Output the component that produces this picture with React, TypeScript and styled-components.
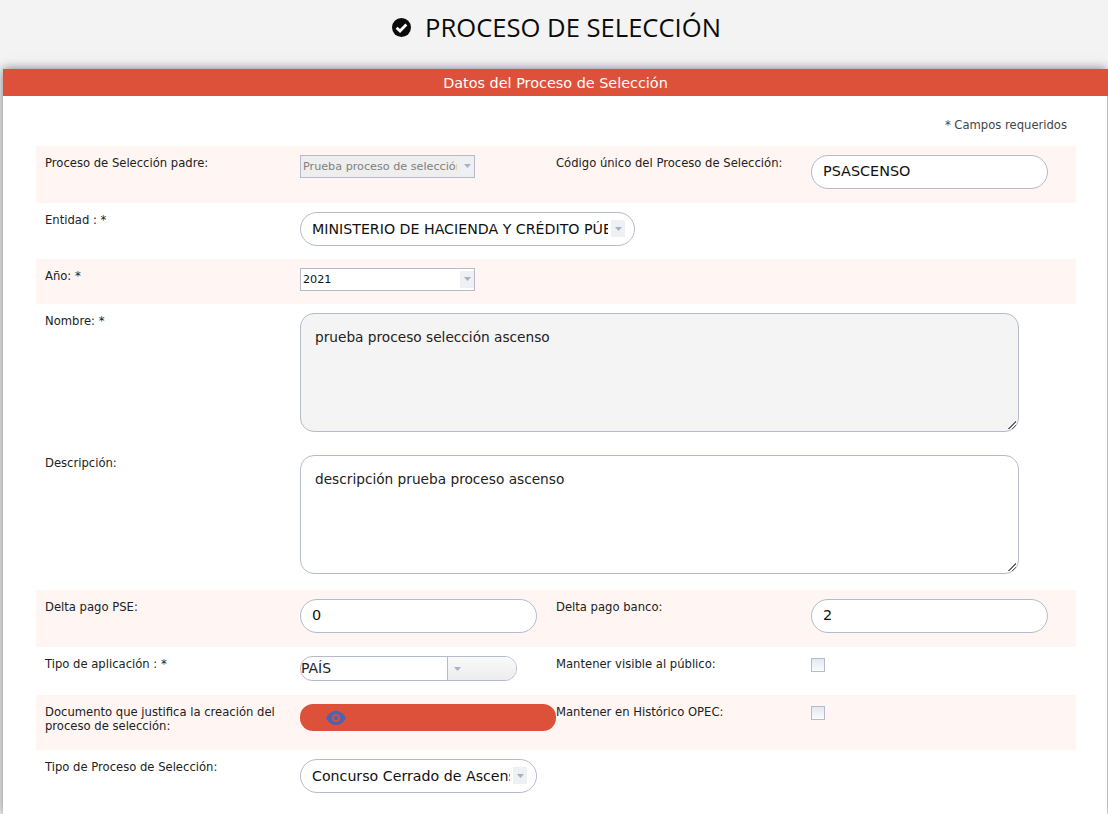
import React from "react";
import styled, { createGlobalStyle } from "styled-components";

const GlobalStyle = createGlobalStyle`
  html, body {
    margin: 0;
    height: 814px;
    overflow: hidden;
    background: #f3f3f3;
    font-family: "DejaVu Sans", Verdana, sans-serif;
    color: #222;
  }
`;

function CheckIcon() {
  return (
    <svg width="19" height="19" viewBox="0 0 18 18" aria-hidden="true">
      <circle cx="9" cy="9" r="9" fill="#0b0b0b" />
      <path d="M4.4 9.2 L7.6 12.3 L13.6 6.2" fill="none" stroke="#fff" strokeWidth="2.7" />
    </svg>
  );
}

function EyeIcon() {
  return (
    <svg width="20" height="14" viewBox="0 0 20 14" aria-hidden="true">
      <path d="M0 7 C3.5 1.5 6.5 0 10 0 C13.5 0 16.5 1.5 20 7 C16.5 12.5 13.5 14 10 14 C6.5 14 3.5 12.5 0 7 Z" fill="#4a63b5" />
      <circle cx="10" cy="7" r="4" fill="#dd513a" />
      <circle cx="10" cy="7" r="2.2" fill="#4a63b5" />
    </svg>
  );
}

function Caret() {
  return (
    <svg width="7" height="4" viewBox="0 0 7 4" aria-hidden="true">
      <path d="M0 0 H7 L3.5 4 Z" fill="#a6b0c8" />
    </svg>
  );
}

export default function App() {
  return (
    <>
      <GlobalStyle />
      <Title>
        <CheckIcon />
        <TitleText>PROCESO DE SELECCIÓN</TitleText>
      </Title>
      <Card>
        <CardHeader>Datos del Proceso de Selección</CardHeader>
        <CardBody>
          <Required>* Campos requeridos</Required>

          <Row $shaded $height={57}>
            <Label>Proceso de Selección padre:</Label>
            <Cell $top={9}>
              <SmallSelect $disabled>
                <SmallValue>Prueba proceso de selección</SmallValue>
                <CaretBox><Caret /></CaretBox>
              </SmallSelect>
            </Cell>
            <SecondLabel>Código único del Proceso de Selección:</SecondLabel>
            <Cell $top={9}>
              <PillInput>PSASCENSO</PillInput>
            </Cell>
          </Row>

          <Row $height={56}>
            <Label>Entidad : *</Label>
            <WideCell $top={9}>
              <PillSelect $width={335}>
                <PillValue>MINISTERIO DE HACIENDA Y CRÉDITO PÚBLICO</PillValue>
                <CaretBox><Caret /></CaretBox>
              </PillSelect>
            </WideCell>
          </Row>

          <Row $shaded $height={45}>
            <Label>Año: *</Label>
            <Cell $top={9}>
              <SmallSelect>
                <SmallValue>2021</SmallValue>
                <CaretBox><Caret /></CaretBox>
              </SmallSelect>
            </Cell>
          </Row>

          <Row $height={142}>
            <Label>Nombre: *</Label>
            <WideCell $top={9}>
              <TextBlock $grey>prueba proceso selección ascenso</TextBlock>
            </WideCell>
          </Row>

          <Row $height={144}>
            <Label>Descripción:</Label>
            <WideCell $top={9}>
              <TextBlock>descripción prueba proceso ascenso</TextBlock>
            </WideCell>
          </Row>

          <Row $shaded $height={57}>
            <Label>Delta pago PSE:</Label>
            <Cell $top={9}>
              <PillInput>0</PillInput>
            </Cell>
            <SecondLabel>Delta pago banco:</SecondLabel>
            <Cell $top={9}>
              <PillInput>2</PillInput>
            </Cell>
          </Row>

          <Row $height={48}>
            <Label>Tipo de aplicación : *</Label>
            <Cell $top={9}>
              <ComboBox>
                <ComboValue>PAÍS</ComboValue>
                <ComboArrow><Caret /></ComboArrow>
              </ComboBox>
            </Cell>
            <SecondLabel>Mantener visible al público:</SecondLabel>
            <Cell $top={11}>
              <CheckBox />
            </Cell>
          </Row>

          <Row $shaded $height={55}>
            <Label>Documento que justifica la creación del proceso de selección:</Label>
            <Cell $top={9}>
              <DocButton>
                <EyeIcon />
              </DocButton>
            </Cell>
            <SecondLabel>Mantener en Histórico OPEC:</SecondLabel>
            <Cell $top={11}>
              <CheckBox />
            </Cell>
          </Row>

          <Row $height={64}>
            <Label>Tipo de Proceso de Selección:</Label>
            <Cell $top={9}>
              <PillSelect $width={237}>
                <PillValue>Concurso Cerrado de Ascenso</PillValue>
                <CaretBox><Caret /></CaretBox>
              </PillSelect>
            </Cell>
          </Row>
        </CardBody>
      </Card>
    </>
  );
}

const Title = styled.header`
  height: 69px;
  box-sizing: border-box;
  padding: 0 0 15px 5px;
  display: flex;
  align-items: center;
  justify-content: center;
  gap: 14px;
`;

const TitleText = styled.h1`
  margin: 0;
  font-family: "Open Sans", sans-serif;
  font-size: 25.6px;
  font-weight: 400;
  color: #0b0b0b;
`;

const Card = styled.main`
  margin: 0 1px 0 3px;
  background: #fff;
  box-shadow: 0 0 10px rgba(0, 0, 0, 0.5);
  height: 745px;
`;

const CardHeader = styled.div`
  height: 27px;
  box-sizing: border-box;
  margin-right: -1px;
  padding-top: 1px;
  line-height: 27px;
  background: #dd513a;
  color: #fff;
  text-align: center;
  font-size: 14.4px;
`;

const CardBody = styled.div`
  padding: 0 31px 0 33px;
`;

const Required = styled.div`
  height: 50px;
  box-sizing: border-box;
  padding: 22px 9px 0 0;
  text-align: right;
  font-size: 11.6px;
  line-height: 15px;
  color: #444;
`;

const Row = styled.div<{ $shaded?: boolean; $height: number }>`
  height: ${(p) => p.$height}px;
  display: grid;
  grid-template-columns: 264px 255px 256px 1fr;
  background: ${(p) => (p.$shaded ? "#fff5f3" : "#fff")};
`;

const Label = styled.div`
  padding: 10px 10px 0 9px;
  font-size: 11.6px;
  line-height: 14px;
  color: #222;
`;

const SecondLabel = styled(Label)`
  padding-left: 1px;
`;

const Cell = styled.div<{ $top: number }>`
  padding-top: ${(p) => p.$top}px;
  min-width: 0;
`;

const WideCell = styled(Cell)`
  grid-column: 2 / 5;
`;

const SmallSelect = styled.div<{ $disabled?: boolean }>`
  width: 175px;
  height: 23px;
  box-sizing: border-box;
  display: flex;
  align-items: center;
  padding: 0 0 1px 2px;
  border: 1px solid #b5bbcb;
  background: ${(p) => (p.$disabled ? "#eeeeee" : "#fff")};
  color: ${(p) => (p.$disabled ? "#808080" : "#111")};
`;

const SmallValue = styled.span`
  flex: 1;
  min-width: 0;
  overflow: hidden;
  white-space: nowrap;
  font-size: 11.2px;
`;

const CaretBox = styled.span`
  flex: none;
  width: 14px;
  height: 17px;
  margin-left: 3px;
  display: flex;
  align-items: center;
  justify-content: center;
  background: #eef0f3;
`;

const PillSelect = styled.div<{ $width: number }>`
  width: ${(p) => p.$width}px;
  height: 34px;
  box-sizing: border-box;
  display: flex;
  align-items: center;
  padding: 0 9px 1px 11px;
  border: 1px solid #b5bbcb;
  border-radius: 17px;
  background: #fff;
`;

const PillValue = styled.span`
  flex: 1;
  min-width: 0;
  overflow: hidden;
  white-space: nowrap;
  font-size: 14.2px;
  color: #111;
`;

const PillInput = styled.div`
  width: 237px;
  height: 34px;
  box-sizing: border-box;
  padding: 0 11px;
  line-height: 31px;
  border: 1px solid #b5bbcb;
  border-radius: 17px;
  background: #fff;
  font-size: 14.4px;
  color: #111;
`;

const TextBlock = styled.div<{ $grey?: boolean }>`
  position: relative;
  width: 719px;
  height: 119px;
  box-sizing: border-box;
  padding: 14px 14px;
  line-height: 18px;
  border: 1px solid #b5bbcb;
  border-radius: 14px;
  background: ${(p) => (p.$grey ? "#f4f4f4" : "#fff")};
  font-size: 13.7px;
  color: #222;

  &::after {
    content: "";
    position: absolute;
    right: 2px;
    bottom: 2px;
    width: 8px;
    height: 8px;
    background: linear-gradient(
      135deg,
      transparent 50%,
      #666 50%,
      #666 58%,
      transparent 58%,
      transparent 72%,
      #666 72%,
      #666 80%,
      transparent 80%
    );
  }
`;

const ComboBox = styled.div`
  width: 217px;
  height: 25px;
  box-sizing: border-box;
  display: flex;
  border: 1px solid #b5bbcb;
  border-radius: 12px;
  overflow: hidden;
  background: #fff;
`;

const ComboValue = styled.span`
  width: 146px;
  flex: none;
  line-height: 22px;
  font-size: 14px;
  color: #222;
`;

const ComboArrow = styled.span`
  flex: 1;
  padding-left: 6px;
  display: flex;
  align-items: center;
  border-left: 1px solid #b5bbcb;
  background: linear-gradient(#fafafa, #ececec);
`;

const DocButton = styled.div`
  width: 256px;
  height: 27px;
  box-sizing: border-box;
  padding-left: 26px;
  display: flex;
  align-items: center;
  background: #dd513a;
  border-radius: 13px;
`;

const CheckBox = styled.span`
  display: block;
  width: 14px;
  height: 14px;
  box-sizing: border-box;
  border: 1px solid #b5bbcb;
  background: linear-gradient(#e2e8ee, #fafbfc);
`;
